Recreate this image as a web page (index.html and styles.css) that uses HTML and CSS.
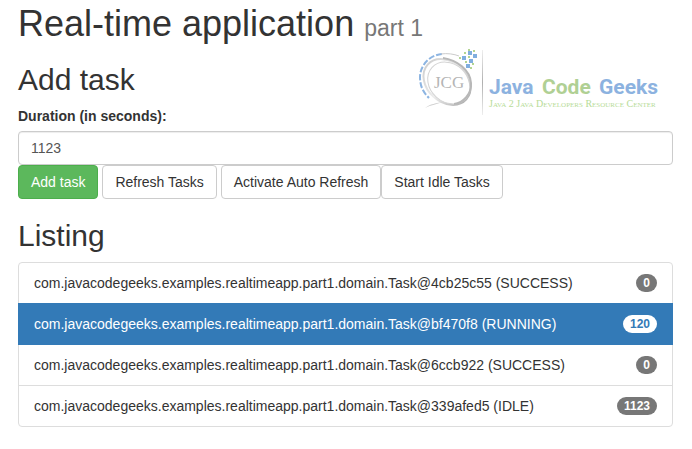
FILE: index.html
```html
<!DOCTYPE html>
<html lang="en">
<head>
    <meta charset="UTF-8">
    <meta name="viewport" content="width=device-width, initial-scale=1.0">
    <title>Real-time application</title>
    <link rel="stylesheet" href="styles.css">
</head>
<body>
    <div class="container">
        <h1>Real-time application <small>part 1</small></h1>

        <!-- Logo -->
        <svg class="logo" viewBox="0 0 242 68" role="img" aria-label="Java Code Geeks">
            <defs>
                <linearGradient id="ring" x1="0" y1="0" x2="1" y2="0">
                    <stop offset="0" stop-color="#d2d2d2"/>
                    <stop offset="0.5" stop-color="#ececec"/>
                    <stop offset="1" stop-color="#b4b4b4"/>
                </linearGradient>
                <linearGradient id="bar" x1="0" y1="0" x2="0" y2="1">
                    <stop offset="0" stop-color="#eeeeee"/>
                    <stop offset="0.5" stop-color="#b0b0b0"/>
                    <stop offset="1" stop-color="#eeeeee"/>
                </linearGradient>
            </defs>
            <path d="M25 5C12 6 3 17 3 28C3 37 6 43 12 49" fill="none" stroke="#8db5e2" stroke-width="2" stroke-dasharray="6 2"/>
            <path d="M24 5C30 4 37 5 42 7" fill="none" stroke="#cccccc" stroke-width="1"/>
            <ellipse cx="30" cy="33" rx="26" ry="20" transform="rotate(42 30 33)" fill="none" stroke="url(#ring)" stroke-width="2"/>
            <ellipse cx="32" cy="34" rx="23" ry="19" transform="rotate(42 32 34)" fill="none" stroke="#d4d4d4" stroke-width="1"/>
            <path d="M26 9C40 11 53 21 54 34C55 45 46 54 37 55" fill="none" stroke="#b8b8b8" stroke-width="2"/>
            <path d="M8 59C13 55 19 54 27 53C20 55 14 56 8 59z" fill="#d0d0d0"/>
            <text class="logo-mark" x="17" y="39">JCG</text>
            <path d="M51 2h4v4h-4zM45 7h4v4h-4zM56 5h4v4h-4zM52 10h4v4h-4zM49 15h4v4h-4z" fill="#80aedf"/>
            <path d="M47 3h2v2h-2zM51 0h2v2h-2zM56 1h2v2h-2zM42 8h2v2h-2zM51 7h2v2h-2zM48 12h2v2h-2zM55 14h2v2h-2zM53 18h2v2h-2z" fill="#b3d591"/>
            <rect x="65" y="1" width="1" height="65" fill="url(#bar)"/>
            <g class="logo-name">
                <text class="blue" x="72" y="45">Java</text>
                <text class="green" x="125" y="45">Code</text>
                <text class="blue" x="182" y="45">Geeks</text>
            </g>
            <text class="logo-tagline" x="72" y="58">Java 2 Java Developers Resource Center</text>
        </svg>

        <h2>Add task</h2>
        <form>
            <label for="duration">Duration (in seconds):</label>
            <input type="text" id="duration" class="form-control" value="1123">
            <button type="button" class="btn btn-success">Add task</button>
            <button type="button" class="btn">Refresh Tasks</button>
            <button type="button" class="btn">Activate Auto Refresh</button><button type="button" class="btn">Start Idle Tasks</button>
        </form>

        <h2>Listing</h2>
        <ul class="list-group">
            <li>com.javacodegeeks.examples.realtimeapp.part1.domain.Task@4cb25c55 (SUCCESS) <span class="badge">0</span></li>
            <li class="active">com.javacodegeeks.examples.realtimeapp.part1.domain.Task@bf470f8 (RUNNING) <span class="badge">120</span></li>
            <li>com.javacodegeeks.examples.realtimeapp.part1.domain.Task@6ccb922 (SUCCESS) <span class="badge">0</span></li>
            <li>com.javacodegeeks.examples.realtimeapp.part1.domain.Task@339afed5 (IDLE) <span class="badge">1123</span></li>
        </ul>
    </div>
</body>
</html>
```
FILE: styles.css
```css
* {
    box-sizing: border-box;
}

body {
    margin: 0;
    font-family: "Liberation Sans", Arial, sans-serif;
    font-size: 14px;
    line-height: 20px;
    color: #333;
    background-color: #fff;
}

.container {
    position: relative;
    padding: 4px 19px 20px 18px;
}

h1, h2 {
    font-weight: 500;
    margin: 20px 0 10px;
}

h1 {
    font-size: 36px;
    line-height: 39px;
    margin-top: 0;
}

h1 small {
    font-size: 23px;
    font-weight: 400;
    line-height: 1;
    color: #777;
}

h2 {
    font-size: 30px;
    line-height: 33px;
}

/* Logo floats over the top right corner */
.logo {
    position: absolute;
    top: 49px;
    right: 33px;
    width: 242px;
    height: 68px;
    overflow: visible;
}

.logo-mark {
    font-family: "Liberation Serif", serif;
    font-size: 17px;
    fill: #b5b5b5;
}

.logo-name {
    font-family: Roboto, "Liberation Sans", sans-serif;
    font-size: 21px;
    font-weight: bold;
}

.logo-name .blue {
    fill: #8cb2e0;
}

.logo-name .green {
    fill: #b0d094;
}

.logo-tagline {
    font-family: "Liberation Serif", serif;
    font-size: 10px;
    font-variant: small-caps;
    fill: #b7dc98;
}

/* Form */
label {
    display: block;
    margin-bottom: 5px;
    font-weight: bold;
}

.form-control {
    display: block;
    width: 100%;
    height: 34px;
    padding: 6px 12px;
    font-family: inherit;
    font-size: 14px;
    line-height: 20px;
    color: #555;
    background-color: #fff;
    border: 1px solid #ccc;
    border-radius: 4px;
    box-shadow: inset 0 1px 1px rgba(0, 0, 0, 0.075);
}

.btn {
    padding: 6px 12px;
    font-family: inherit;
    font-size: 14px;
    line-height: 20px;
    vertical-align: middle;
    color: #333;
    background-color: #fff;
    border: 1px solid #ccc;
    border-radius: 4px;
    cursor: pointer;
}

.btn-success {
    color: #fff;
    background-color: #5cb85c;
    border-color: #4cae4c;
}

/* Task list */
.list-group {
    margin: 0;
    padding: 0;
    list-style: none;
}

.list-group li {
    display: flex;
    justify-content: space-between;
    align-items: center;
    padding: 10px 15px;
    margin-bottom: -1px;
    border: 1px solid #ddd;
}

.list-group li:first-child {
    border-radius: 4px 4px 0 0;
}

.list-group li:last-child {
    margin-bottom: 0;
    border-radius: 0 0 4px 4px;
}

.list-group .active {
    position: relative;
    color: #fff;
    background-color: #337ab7;
    border-color: #337ab7;
}

.badge {
    padding: 3px 7px;
    font-size: 12px;
    font-weight: bold;
    line-height: 12px;
    color: #fff;
    background-color: #777;
    border-radius: 10px;
}

.active .badge {
    color: #337ab7;
    background-color: #fff;
}
```
